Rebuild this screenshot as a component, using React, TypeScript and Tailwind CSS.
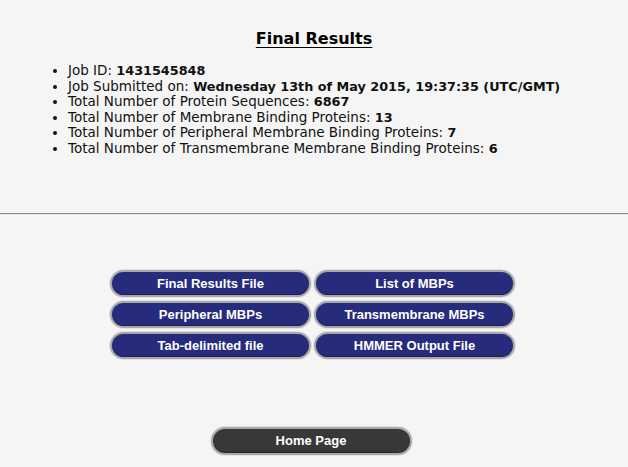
import * as React from "react";

const stats: { label: string; value: string }[] = [
	{ label: "Job ID:", value: "1431545848" },
	{ label: "Job Submitted on:", value: "Wednesday 13th of May 2015, 19:37:35 (UTC/GMT)" },
	{ label: "Total Number of Protein Sequences:", value: "6867" },
	{ label: "Total Number of Membrane Binding Proteins:", value: "13" },
	{ label: "Total Number of Peripheral Membrane Binding Proteins:", value: "7" },
	{ label: "Total Number of Transmembrane Membrane Binding Proteins:", value: "6" },
];

const files = [
	"Final Results File",
	"List of MBPs",
	"Peripheral MBPs",
	"Transmembrane MBPs",
	"Tab-delimited file",
	"HMMER Output File",
];

function PillButton({ label, dark }: { label: string; dark?: boolean }) {
	return (
		<button
			type="button"
			className={`w-[201px] rounded-full border-2 border-[#a8a8a8] text-[13px] font-bold text-white shadow-[0_0_0_1px_#e2e2e2,inset_0_-1px_1px_rgba(0,0,0,0.3)] ${
				dark ? "h-[28px] bg-[#383838]" : "h-[27px] bg-[#272b7c]"
			}`}
			style={{ fontFamily: '"Liberation Sans", Arial, sans-serif' }}
		>
			{label}
		</button>
	);
}

export default function App() {
	return (
		<div
			className="min-h-[467px] w-full bg-[#f5f5f5] text-black"
			style={{ fontFamily: '"DejaVu Sans", Verdana, sans-serif' }}
		>
			<div className="h-[213px] pt-[27px]">
				<h1 className="text-center text-[16px] font-bold underline underline-offset-[3px] decoration-1">
					Final Results
				</h1>
				<ul className="mt-[12px] list-disc pl-[68px] text-[13.5px] leading-[15.6px] text-[#111]">
					{stats.map((s) => (
						<li key={s.label}>
							{s.label} <b className="text-[12.8px]">{s.value}</b>
						</li>
					))}
				</ul>
			</div>
			<div className="h-[2px] border-t border-[#8a8a8a] bg-[#e8e8e8]" />
			<div className="flex justify-center pr-[3px] pt-[55px]">
				<div className="grid grid-cols-2 gap-x-[3px] gap-y-[4px]">
					{files.map((f) => (
						<PillButton key={f} label={f} />
					))}
				</div>
			</div>
			<div className="flex justify-center pr-[6px] pt-[68px]">
				<PillButton label="Home Page" dark />
			</div>
		</div>
	);
}
